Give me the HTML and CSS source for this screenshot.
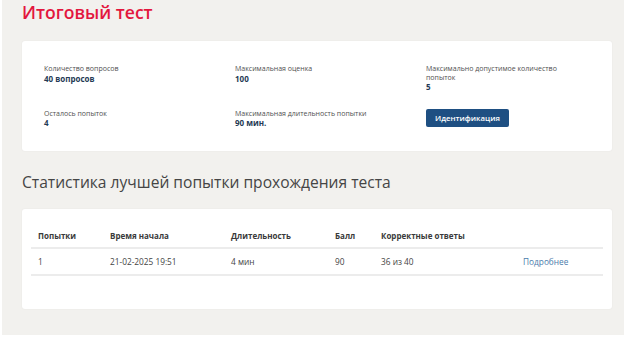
FILE: index.html
```html
<!DOCTYPE html>
<html lang="ru">
<head>
<meta charset="utf-8">
<title>Итоговый тест</title>
<link rel="stylesheet" href="styles.css">
</head>
<body>
<div class="page">
  <h1 class="title">Итоговый тест</h1>
  <section class="card info">
    <div class="field">
      <div class="label">Количество вопросов</div>
      <div class="value">40 вопросов</div>
    </div>
    <div class="field">
      <div class="label">Максимальная оценка</div>
      <div class="value">100</div>
    </div>
    <div class="field">
      <div class="label wrap">Максимально допустимое количество попыток</div>
      <div class="value">5</div>
    </div>
    <div class="field">
      <div class="label">Осталось попыток</div>
      <div class="value">4</div>
    </div>
    <div class="field">
      <div class="label">Максимальная длительность попытки</div>
      <div class="value">90 мин.</div>
    </div>
    <div class="field">
      <button class="btn">Идентификация</button>
    </div>
  </section>
  <h2 class="subtitle">Статистика лучшей попытки прохождения теста</h2>
  <section class="card stats">
    <table class="table">
      <colgroup>
        <col class="c1"><col class="c2"><col class="c3"><col class="c4"><col class="c5"><col class="c6">
      </colgroup>
      <thead>
        <tr>
          <th>Попытки</th>
          <th>Время начала</th>
          <th>Длительность</th>
          <th>Балл</th>
          <th>Корректные ответы</th>
          <th></th>
        </tr>
      </thead>
      <tbody>
        <tr>
          <td>1</td>
          <td>21-02-2025 19:51</td>
          <td>4 мин</td>
          <td>90</td>
          <td>36 из 40</td>
          <td><a class="link" href="#">Подробнее</a></td>
        </tr>
      </tbody>
    </table>
  </section>
</div>
</body>
</html>
```
FILE: styles.css
```css
* { box-sizing: border-box; }
html, body { margin: 0; padding: 0; background: #ffffff; }
body { font-family: "Open Sans", "Noto Sans", sans-serif; }

.page {
  margin-left: 2px;
  width: 622px;
  height: 335px;
  background: #f2f1ee;
  padding: 0 12px 0 20px;
  overflow: hidden;
}

.title {
  margin: 0 0 17px 0;
  font-size: 17.6px;
  line-height: 24px;
  font-weight: 600;
  color: #e3173e;
}

.card {
  background: #ffffff;
  border-radius: 3px;
  box-shadow: 0 0 2px rgba(0,0,0,0.06);
}

.info {
  display: grid;
  grid-template-columns: 191px 191px 1fr;
  row-gap: 18px;
  padding: 24px 22px 23px 22px;
  height: 110px;
}

.label {
  font-size: 7px;
  line-height: 8.5px;
  color: #4f4f4f;
}
.label.wrap { max-width: 140px; }

.value {
  font-size: 8px;
  line-height: 9.5px;
  font-weight: 700;
  color: #253a55;
}

.btn {
  display: block;
  margin: -1px 0 0 0;
  height: 18px;
  padding: 0 9px;
  border: none;
  border-radius: 2px;
  background: #1e4f82;
  color: #ffffff;
  font-family: "Open Sans", "Noto Sans", sans-serif;
  font-size: 7.8px;
  font-weight: 600;
  line-height: 18px;
}

.subtitle {
  margin: 21px 0 17px 0;
  font-size: 15.6px;
  line-height: 20px;
  font-weight: 400;
  color: #454545;
}

.stats {
  padding: 17px 9px 33px 9px;
  height: 100px;
}

.table {
  width: 100%;
  border-collapse: collapse;
  table-layout: fixed;
}
.c1 { width: 72px; }
.c2 { width: 121px; }
.c3 { width: 104px; }
.c4 { width: 46px; }
.c5 { width: 142px; }
.c6 { width: auto; }

.table th {
  text-align: left;
  font-size: 8px;
  line-height: 9px;
  font-weight: 700;
  color: #3a3a3a;
  padding: 5px 7px 7px 7px;
  border-bottom: 2px solid #ececec;
}
.table td {
  font-size: 8.3px;
  line-height: 9px;
  color: #444444;
  padding: 8px 7px 8px 7px;
  border-bottom: 2px solid #ececec;
}
.link {
  color: #4a7bab;
  text-decoration: none;
}
```
